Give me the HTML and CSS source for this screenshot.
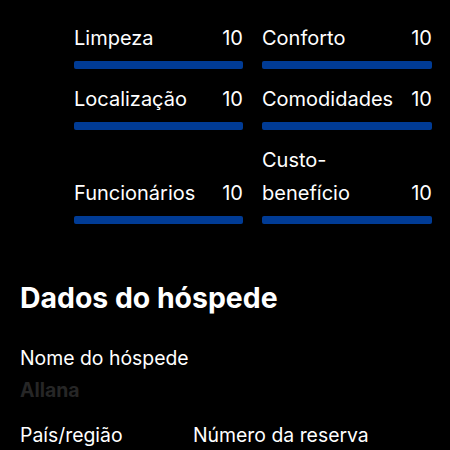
FILE: index.html
```html
<!DOCTYPE html>
<html lang="pt">
<head>
    <meta charset="UTF-8" />
    <meta name="viewport" content="width=device-width, initial-scale=1" />
    <title>Avaliação e dados do hóspede</title>
    <link rel="stylesheet" href="styles.css">
</head>
<body>
    <section class="scores">
        <div class="score">
            <div class="score-head"><span>Limpeza</span><span>10</span></div>
            <div class="bar"></div>
        </div>
        <div class="score">
            <div class="score-head"><span>Conforto</span><span>10</span></div>
            <div class="bar"></div>
        </div>
        <div class="score">
            <div class="score-head"><span>Localização</span><span>10</span></div>
            <div class="bar"></div>
        </div>
        <div class="score">
            <div class="score-head"><span>Comodidades</span><span>10</span></div>
            <div class="bar"></div>
        </div>
        <div class="score">
            <div class="score-head"><span>Funcionários</span><span>10</span></div>
            <div class="bar"></div>
        </div>
        <div class="score">
            <div class="score-head"><span>Custo-<br>benefício</span><span>10</span></div>
            <div class="bar"></div>
        </div>
    </section>

    <section class="guest">
        <h2>Dados do hóspede</h2>
        <div class="field">
            <div class="label">Nome do hóspede</div>
            <div class="value">Allana</div>
        </div>
        <div class="field-row">
            <div class="label">País/região</div>
            <div class="label">Número da reserva</div>
        </div>
    </section>
</body>
</html>
```

FILE: styles.css
```css
body {
    margin: 0;
    background: #000;
    color: #fff;
    font-family: Inter, "Noto Sans", sans-serif;
}
.scores {
    display: grid;
    grid-template-columns: 169px 170px;
    column-gap: 19px;
    row-gap: 14px;
    padding: 22px 0 0 74px;
}
.score {
    display: flex;
    flex-direction: column;
    justify-content: flex-end;
}
.score-head {
    display: flex;
    justify-content: space-between;
    align-items: flex-end;
    font-size: 20px;
    line-height: 33px;
}
.bar {
    height: 8px;
    margin-top: 6px;
    border-radius: 2px;
    background: #003b95;
}
.guest {
    padding: 0 20px;
}
h2 {
    margin: 57px 0 0;
    font-size: 28.4px;
    line-height: 34px;
    font-weight: 700;
}
.field {
    margin-top: 31px;
}
.label {
    font-size: 19.4px;
    line-height: 24px;
}
.value {
    margin-top: 8px;
    font-size: 19.4px;
    line-height: 24px;
    font-weight: 700;
    color: #262626;
}
.field-row {
    display: grid;
    grid-template-columns: 173px auto;
    margin-top: 21px;
}
```
